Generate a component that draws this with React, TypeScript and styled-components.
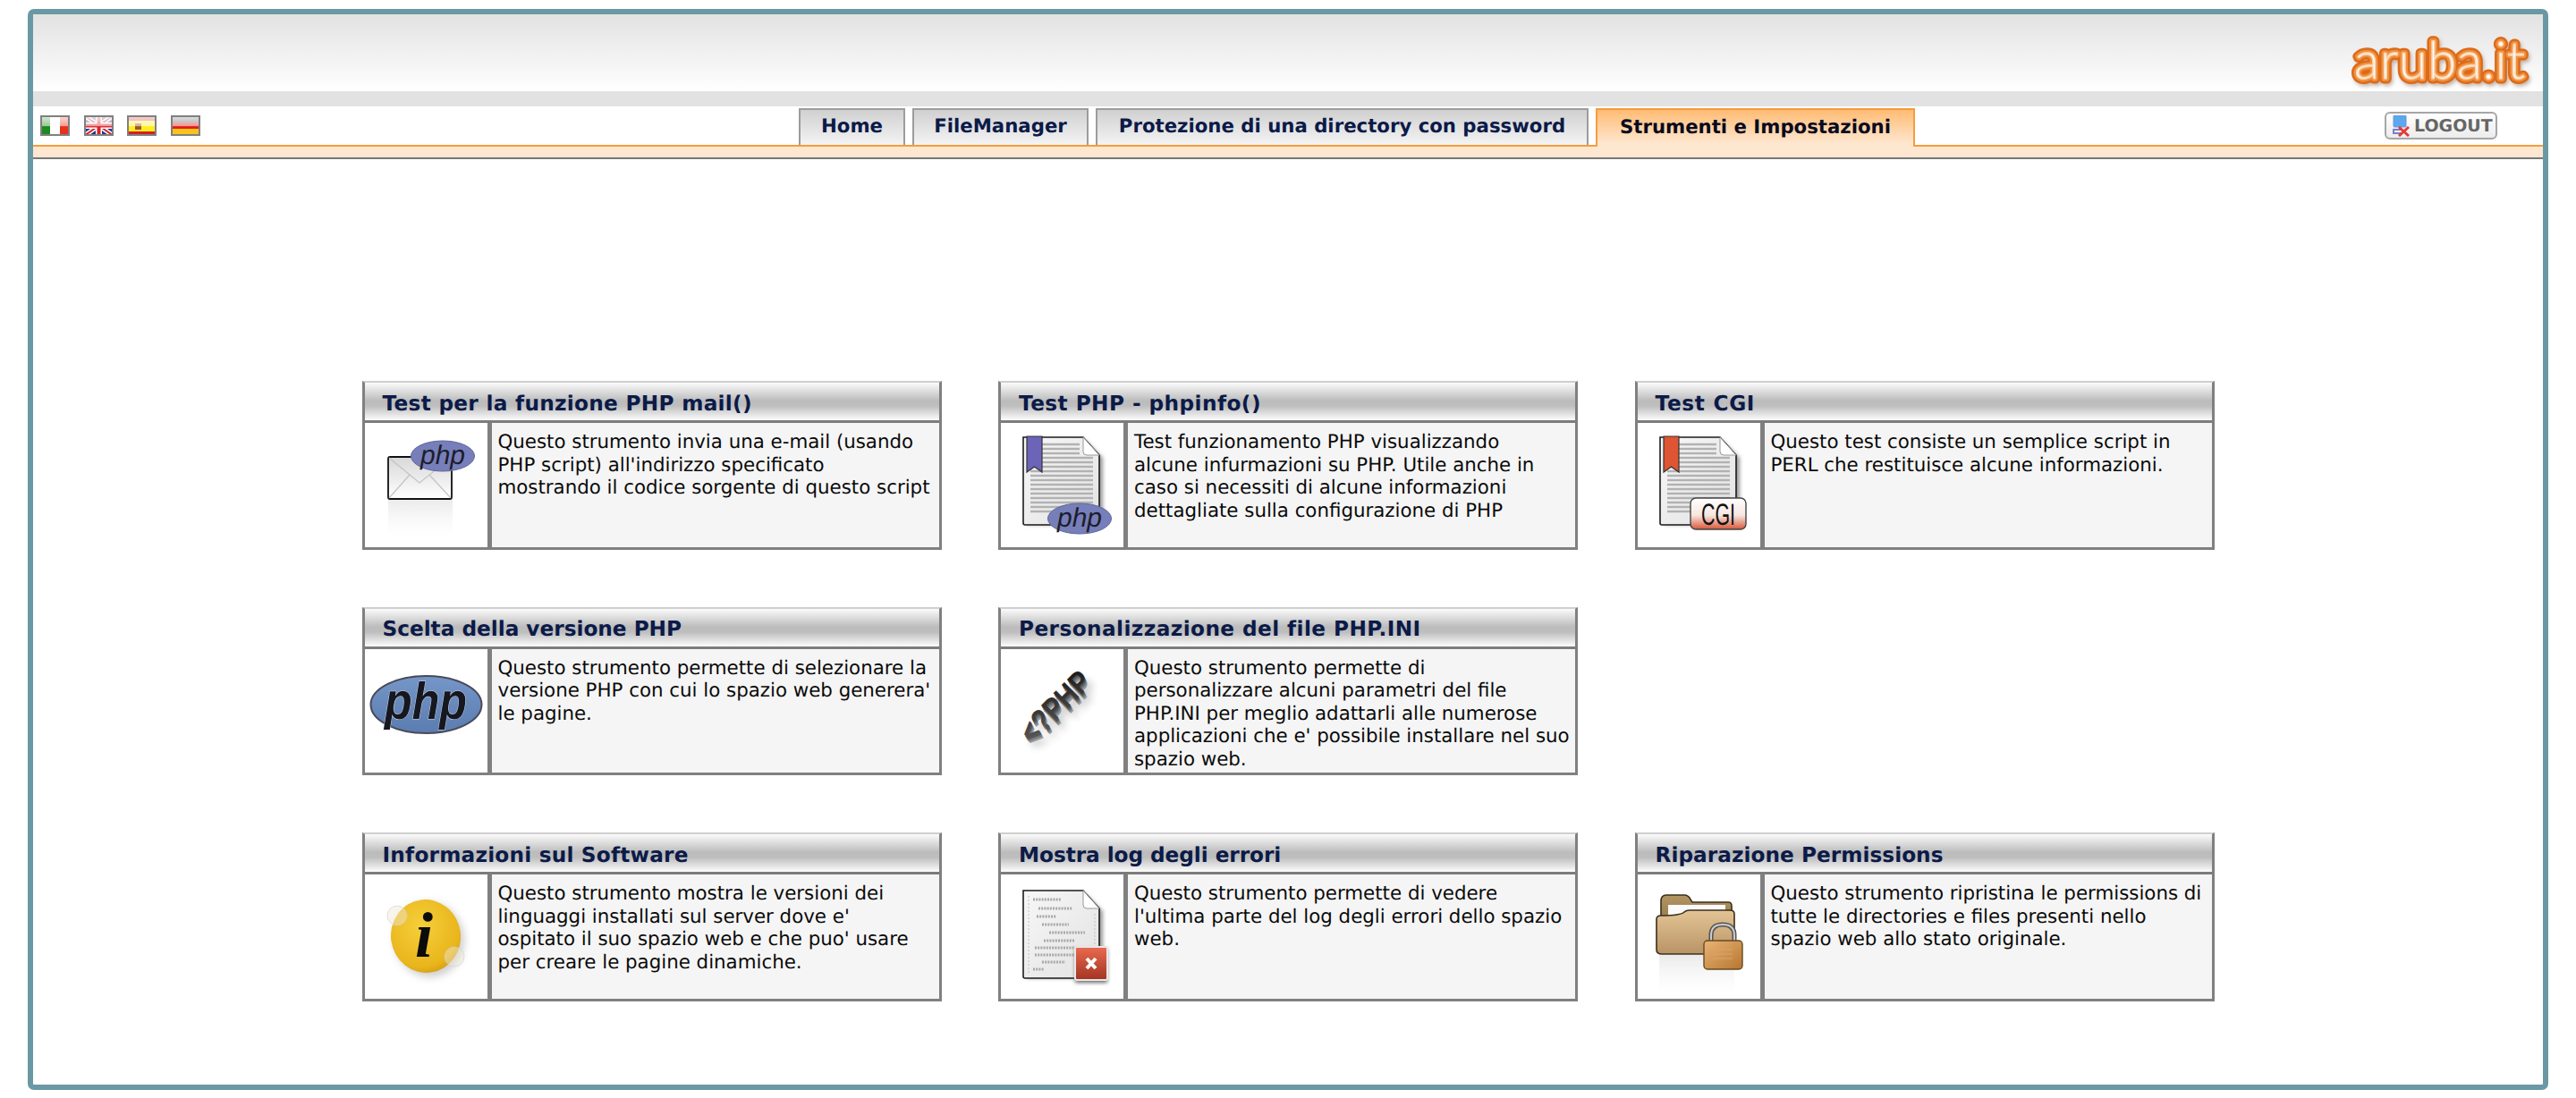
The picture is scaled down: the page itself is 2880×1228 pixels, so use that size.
import React from "react";
import styled, { createGlobalStyle } from "styled-components";

const Global = createGlobalStyle`
  html, body { margin: 0; padding: 0; background: #fff; }
  body { font-family: "DejaVu Sans", Verdana, sans-serif; text-rendering: geometricPrecision; }
`;

const Frame = styled.div`
  box-sizing: border-box;
  width: 2818px;
  height: 1209px;
  margin: 10px 31px 9px;
  border: 6px solid #6a99a3;
  border-radius: 7px;
  background: #fff;
  overflow: hidden;
`;

const Header = styled.header`
  height: 86px;
  display: flex;
  justify-content: flex-end;
  align-items: flex-end;
  padding: 0 14px 4px 0;
  box-sizing: border-box;
  background: linear-gradient(#e2e2e2, #ffffff);
`;

const Strip = styled.div`
  height: 17px;
  background: #e2e2e2;
`;

const Nav = styled.nav`
  box-sizing: border-box;
  height: 45px;
  display: flex;
  align-items: flex-end;
  padding-left: 8px;
  border-bottom: 2px solid #f79c3c;
`;

const Flags = styled.div`
  display: flex;
  gap: 15.5px;
  align-self: flex-start;
  margin-top: 10px;
`;

const Tabs = styled.div`
  display: flex;
  gap: 8px;
  margin-left: 669.5px;
  align-items: flex-end;
`;

const Tab = styled.a<{ $active?: boolean; $width: number }>`
  box-sizing: border-box;
  width: ${(p) => p.$width}px;
  height: ${(p) => (p.$active ? "43px" : "41px")};
  margin-bottom: ${(p) => (p.$active ? "-2px" : "0")};
  padding-bottom: 2px;
  display: flex;
  align-items: center;
  justify-content: center;
  border: 2px solid ${(p) => (p.$active ? "#f79c3c" : "#9c9c9c")};
  border-bottom: none;
  background: ${(p) =>
    p.$active
      ? "linear-gradient(#ffbc74, #fee7d0 92%)"
      : "linear-gradient(#d0d0d0, #f4f4f4)"};
  color: ${(p) => (p.$active ? "#0a0a1e" : "#0b1a48")};
  font: bold 21.25px "DejaVu Sans", Verdana, sans-serif;
  white-space: nowrap;
`;

const Logout = styled.a`
  box-sizing: border-box;
  width: 126px;
  height: 31px;
  margin: 6px 51px 0 auto;
  align-self: flex-start;
  display: flex;
  align-items: center;
  gap: 5px;
  padding-left: 6px;
  border: 2px solid #a6a6a6;
  border-radius: 6px;
  background: linear-gradient(#ffffff, #ececec);
  color: #666;
  font: bold 19px "DejaVu Sans", Verdana, sans-serif;
  white-space: nowrap;
`;

const Peach = styled.div`
  height: 12px;
  background: #fee7d0;
  border-bottom: 2px solid #777;
`;

const Grid = styled.main`
  display: grid;
  grid-template-columns: repeat(3, 648px);
  grid-auto-rows: 188.5px;
  column-gap: 63.5px;
  row-gap: 64px;
  justify-content: center;
  padding-top: 248px;
`;

const Card = styled.section`
  box-sizing: border-box;
  display: flex;
  flex-direction: column;
  border: 3px solid #808080;
  border-top: 2px solid #cfcfcf;
  background: #f5f5f5;
`;

const CardTitle = styled.h2<{ $tracking: number }>`
  box-sizing: border-box;
  margin: 0;
  flex: 0 0 45px;
  display: flex;
  align-items: center;
  padding: 4px 0 0 20px;
  border-bottom: 3px solid #7c7c7c;
  background: linear-gradient(#fbfbfb 0%, #bcbcbc 48%, #bebebe 62%, #fdfdfd 100%);
  color: #0b1a48;
  font: bold 23.2px "DejaVu Sans", Verdana, sans-serif;
  letter-spacing: ${(p) => p.$tracking}px;
  white-space: nowrap;
`;

const CardBody = styled.div`
  flex: 1;
  min-height: 0;
  display: flex;
`;

const IconCell = styled.div`
  box-sizing: content-box;
  flex: 0 0 137px;
  border-right: 5px solid #808080;
  background: #fff;
  overflow: hidden;
  svg { display: block; }
`;

const CardText = styled.div`
  flex: 1;
  padding: 9px 0 0 7px;
  font: 400 21.35px/25.5px "DejaVu Sans", Verdana, sans-serif;
  color: #0a0a0a;
`;

const Line = styled.span`
  display: block;
  white-space: nowrap;
`;

/* ---------- drawings ---------- */

const Shared = () => (
  <svg width="0" height="0" style={{ position: "absolute" }}>
    <defs>
      <linearGradient id="gloss" x1="0" y1="0" x2="0" y2="1">
        <stop offset="0" stopColor="#fff" stopOpacity="0.85" />
        <stop offset="0.5" stopColor="#fff" stopOpacity="0.55" />
        <stop offset="0.55" stopColor="#fff" stopOpacity="0" />
      </linearGradient>
      <linearGradient id="env" x1="0" y1="0" x2="0" y2="1">
        <stop offset="0" stopColor="#d8d8d8" />
        <stop offset="1" stopColor="#ffffff" />
      </linearGradient>
      <linearGradient id="paper" x1="0" y1="0" x2="1" y2="1">
        <stop offset="0" stopColor="#f7f7f7" />
        <stop offset="1" stopColor="#e2e2e2" />
      </linearGradient>
      <linearGradient id="fade" x1="0" y1="0" x2="0" y2="1">
        <stop offset="0" stopColor="#bbb" stopOpacity="0.3" />
        <stop offset="1" stopColor="#ddd" stopOpacity="0" />
      </linearGradient>
      <linearGradient id="cgiBadge" x1="0" y1="0" x2="0" y2="1">
        <stop offset="0" stopColor="#ffffff" />
        <stop offset="0.55" stopColor="#f7e6e0" />
        <stop offset="1" stopColor="#d9573a" />
      </linearGradient>
      <linearGradient id="redBadge" x1="0" y1="0" x2="0" y2="1">
        <stop offset="0" stopColor="#ea6a50" />
        <stop offset="1" stopColor="#a23422" />
      </linearGradient>
      <linearGradient id="folder" x1="0" y1="0" x2="0" y2="1">
        <stop offset="0" stopColor="#e3c595" />
        <stop offset="1" stopColor="#b99365" />
      </linearGradient>
      <linearGradient id="folderBack" x1="0" y1="0" x2="0" y2="1">
        <stop offset="0" stopColor="#b39563" />
        <stop offset="1" stopColor="#8e7347" />
      </linearGradient>
      <linearGradient id="lock" x1="0" y1="0" x2="1" y2="1">
        <stop offset="0" stopColor="#e9b577" />
        <stop offset="1" stopColor="#b6752f" />
      </linearGradient>
      <radialGradient id="yellow" cx="0.45" cy="0.35" r="0.75">
        <stop offset="0" stopColor="#f6cf3a" />
        <stop offset="0.75" stopColor="#e9b51c" />
        <stop offset="1" stopColor="#c58f12" />
      </radialGradient>
      <linearGradient id="bigPhp" x1="0" y1="0" x2="0" y2="1">
        <stop offset="0" stopColor="#7596c8" />
        <stop offset="1" stopColor="#5b7cb0" />
      </linearGradient>
      <linearGradient id="php3d" x1="0" y1="1" x2="1" y2="0">
        <stop offset="0" stopColor="#666" />
        <stop offset="1" stopColor="#111" />
      </linearGradient>
      <filter id="blur2"><feGaussianBlur stdDeviation="2" /></filter>
      <filter id="blur4"><feGaussianBlur stdDeviation="4" /></filter>
    </defs>
  </svg>
);

const IconSvg: React.FC<{ children: React.ReactNode }> = ({ children }) => (
  <svg width="137" height="138" viewBox="0 0 137 138">{children}</svg>
);

const PhpBadge: React.FC<{ cx: number; cy: number }> = ({ cx, cy }) => (
  <g>
    <ellipse cx={cx} cy={cy} rx="35.5" ry="17" fill="#777fba" stroke="#5f6699" strokeWidth="1" />
    <text
      x={cx}
      y={cy + 9}
      textAnchor="middle"
      fontFamily="'Liberation Sans', sans-serif"
      fontStyle="italic"
      fontSize="30"
      fill="#1d1d2b"
    >
      php
    </text>
  </g>
);

const DocBase: React.FC<{ mark?: string }> = ({ mark }) => {
  const rows: number[] = [];
  for (let y = 24; y < 100; y += 5) rows.push(y);
  return (
    <g>
      <path d="M27 18 H93 L112 37 V112 H27 Z" fill="#999" filter="url(#blur2)" transform="translate(2 2)" />
      <path d="M25 16 H92 L110 36 V112 Q110 114 108 114 H27 Q25 114 25 112 Z" fill="url(#paper)" stroke="#1b1b1b" strokeWidth="1.6" />
      <path d="M92 16 V32 Q92 36 96 36 H110 Z" fill="#fff" stroke="#999" strokeWidth="1" />
      {mark &&
        rows.map((y) => (
          <line key={y} x1="33" x2={y < 36 ? 88 : 103} y1={y} y2={y} stroke="#b2b2b2" strokeWidth="2.4" />
        ))}
      {mark && (
        <path d="M29 15 H46 V55 L37.5 49 L29 55 Z" fill={mark} stroke="#333" strokeWidth="1.2" />
      )}
    </g>
  );
};

const MailIcon = () => (
  <IconSvg>
    <rect x="26" y="85" width="72" height="42" fill="url(#fade)" />
    <rect x="26" y="38" width="71" height="47" rx="2" fill="url(#env)" stroke="#111" strokeWidth="1.8" />
    <path d="M27 39 L61 67 L96 39 M27 84 L50 58 M96 84 L72 58" fill="none" stroke="#c4c4c4" strokeWidth="1.2" />
    <PhpBadge cx={87} cy={37} />
  </IconSvg>
);

const PhpDocIcon = () => (
  <IconSvg>
    <DocBase mark="#6b64b8" />
    <PhpBadge cx={88} cy={107} />
  </IconSvg>
);

const CgiIcon = () => (
  <IconSvg>
    <DocBase mark="#df5433" />
    <rect x="59" y="84" width="62" height="35" rx="6" fill="url(#cgiBadge)" stroke="#444" strokeWidth="1.4" />
    <text
      x="90"
      y="114"
      textAnchor="middle"
      fontFamily="'Liberation Sans', sans-serif"
      fontSize="34"
      fill="#111"
      textLength="38"
      lengthAdjust="spacingAndGlyphs"
    >
      CGI
    </text>
  </IconSvg>
);

const PhpLogoIcon = () => (
  <IconSvg>
    <ellipse cx="68.5" cy="62" rx="62" ry="32" fill="url(#bigPhp)" stroke="#4a4a58" strokeWidth="2" />
    <text
      x="68"
      y="78"
      textAnchor="middle"
      fontFamily="'Liberation Sans', sans-serif"
      fontStyle="italic"
      fontWeight="700"
      fontSize="58"
      fill="#17171f"
      stroke="#cfd9ea"
      strokeWidth="1"
      paintOrder="stroke"
      textLength="92"
      lengthAdjust="spacingAndGlyphs"
    >
      php
    </text>
  </IconSvg>
);

const PhpTagIcon = () => {
  const t = (dx: number, dy: number, fill: string) => (
    <text
      x="0"
      y="0"
      transform={`translate(${35 + dx} ${106 + dy}) rotate(-45)`}
      fontFamily="'Liberation Sans', sans-serif"
      fontWeight="700"
      fontSize="34"
      fill={fill}
      textLength="96"
      lengthAdjust="spacingAndGlyphs"
    >
      {"<?PHP"}
    </text>
  );
  return (
    <IconSvg>
      <g filter="url(#blur4)" opacity="0.35">{t(8, 10, "#333")}</g>
      {t(3, 6, "#999")}
      {t(2, 4, "#777")}
      {t(1, 2, "#555")}
      {t(0, 0, "url(#php3d)")}
    </IconSvg>
  );
};

const InfoIcon = () => (
  <IconSvg>
    <ellipse cx="72" cy="73" rx="39" ry="42" fill="#bbb" filter="url(#blur4)" opacity="0.7" transform="rotate(-8 72 73)" />
    <ellipse cx="68" cy="69" rx="39" ry="41" fill="url(#yellow)" transform="rotate(-8 68 69)" />
    <text
      x="66"
      y="92"
      textAnchor="middle"
      fontFamily="'Liberation Serif', serif"
      fontStyle="italic"
      fontWeight="700"
      fontSize="72"
      fill="#0c0c0c"
    >
      i
    </text>
    <circle cx="36" cy="46" r="11" fill="#efe9d6" fillOpacity="0.45" stroke="#cfcfcf" strokeOpacity="0.6" strokeWidth="1" />
    <circle cx="100" cy="92" r="11" fill="#efe9d6" fillOpacity="0.45" stroke="#cfcfcf" strokeOpacity="0.6" strokeWidth="1" />
  </IconSvg>
);

const LogIcon = () => {
  const rows: [number, number, number][] = [
    [32, 12, 32], [42, 18, 38], [51, 16, 22], [60, 22, 30], [69, 30, 40], [78, 24, 34], [86, 14, 50], [94, 14, 54], [102, 22, 26], [110, 12, 12],
  ];
  return (
    <IconSvg>
      <g transform="translate(0 2)"><DocBase /></g>
      <path d="M31 24 V112 M105 44 V112" stroke="#c8c8c8" strokeWidth="1.2" strokeDasharray="2 2" />
      {rows.map(([y, x, w]) => (
        <line key={y} x1={24 + x} x2={24 + x + w} y1={y - 4} y2={y - 4} stroke="#a8a8a8" strokeWidth="3" strokeDasharray="2 1.2" />
      ))}
      <rect x="83" y="83" width="36" height="38" fill="#666" filter="url(#blur2)" />
      <rect x="83" y="81" width="36" height="37" rx="2" fill="url(#redBadge)" stroke="#e8e8e8" strokeWidth="2" />
      <path d="M96 94 L106 105 M106 94 L96 105" stroke="#fff" strokeWidth="4" />
    </IconSvg>
  );
};

const FolderIcon = () => (
  <IconSvg>
    <rect x="24" y="90" width="84" height="42" fill="url(#fade)" />
    <path d="M26 30 Q26 23 32 23 H52 Q57 23 59 28 L61 31 H101 Q105 31 105 35 V60 H26 Z" fill="url(#folderBack)" stroke="#3a2f1c" strokeWidth="1.6" />
    <rect x="34" y="34" width="64" height="24" fill="#fafafa" />
    <path d="M21 50 Q21 46 26 46 Q48 46 52 42 Q54 40 58 40 H103 Q108 40 108 44 V84 Q108 89 103 89 H27 Q21 89 21 84 Z" fill="url(#folder)" stroke="#3a2f1c" strokeWidth="1.6" />
    <path d="M82 76 V68 Q82 56 95 56 Q108 56 108 68 V76" fill="none" stroke="#555" strokeWidth="5" />
    <path d="M82 76 V68 Q82 56 95 56 Q108 56 108 68 V76" fill="none" stroke="#ccc" strokeWidth="2" />
    <rect x="74" y="74" width="43" height="32" rx="4" fill="url(#lock)" stroke="#6a4a20" strokeWidth="1.4" />
    <path d="M84 84 H106 M84 89 H106 M84 94 H106" stroke="#d9a566" strokeWidth="1.2" />
  </IconSvg>
);

const FlagBox: React.FC<{ children: React.ReactNode }> = ({ children }) => (
  <svg width="33" height="23" viewBox="0 0 33 23">
    {children}
    <rect x="0" y="0" width="33" height="23" fill="url(#gloss)" />
    <rect x="1" y="1" width="31" height="21" fill="none" stroke="#808080" strokeWidth="2" />
  </svg>
);

const FlagIt = () => (
  <FlagBox>
    <rect width="11" height="23" fill="#1f8a1f" />
    <rect x="11" width="11" height="23" fill="#fff" />
    <rect x="22" width="11" height="23" fill="#e8301c" />
  </FlagBox>
);
const FlagUk = () => (
  <FlagBox>
    <rect width="33" height="23" fill="#1d3a8a" />
    <path d="M0 0 L33 23 M33 0 L0 23" stroke="#fff" strokeWidth="5" />
    <path d="M0 0 L33 23 M33 0 L0 23" stroke="#d8232a" strokeWidth="2" />
    <path d="M16.5 0 V23 M0 11.5 H33" stroke="#fff" strokeWidth="7" />
    <path d="M16.5 0 V23 M0 11.5 H33" stroke="#d8232a" strokeWidth="4" />
  </FlagBox>
);
const FlagEs = () => (
  <FlagBox>
    <rect width="33" height="23" fill="#d81e1e" />
    <rect y="6" width="33" height="12" fill="#ffee22" />
    <rect x="9" y="9" width="7" height="7" fill="#a0552a" />
  </FlagBox>
);
const FlagDe = () => (
  <FlagBox>
    <rect width="33" height="8" fill="#555" />
    <rect y="8" width="33" height="7" fill="#e0201a" />
    <rect y="15" width="33" height="8" fill="#f8c31c" />
  </FlagBox>
);

const ArubaLogo = () => {
  const t = (props: React.SVGProps<SVGTextElement>) => (
    <text
      x="7"
      y="56"
      fontFamily="Lato, 'Open Sans', sans-serif"
      fontSize="58"
      fontWeight="300"
      strokeLinejoin="round"
      strokeLinecap="round"
      letterSpacing="0.6"
      {...props}
    >
      aruba.it
    </text>
  );
  return (
    <svg width="204" height="66" viewBox="0 0 204 66" overflow="visible">
      {t({ fill: "#8a6a55", stroke: "#8a6a55", strokeWidth: 10, opacity: 0.5, transform: "translate(2 3)", filter: "url(#blur2)" })}
      {t({ fill: "#dd6a18", stroke: "#dd6a18", strokeWidth: 11 })}
      {t({ fill: "#f08f3e", stroke: "#f08f3e", strokeWidth: 6 })}
      {t({ fill: "#fff", stroke: "#fbd3ad", strokeWidth: 1.5 })}
    </svg>
  );
};

const LogoutIcon = () => (
  <svg width="20" height="24" viewBox="0 0 20 24">
    <rect x="2" y="0" width="14" height="13" rx="1" fill="#5aa8f0" stroke="#7a8fd0" strokeWidth="1" />
    <path d="M9 13 V16 H2 V20 H11" fill="none" stroke="#7a7fd0" strokeWidth="2" />
    <path d="M8 13 L19 23 M19 13 L8 23" stroke="#e23a3a" strokeWidth="3" />
  </svg>
);

/* ---------- content ---------- */

type Tool = { title: string; tracking: number; lines: string[]; icon: React.ReactNode } | null;

const tools: Tool[] = [
  { title: "Test per la funzione PHP mail()", tracking: 0.3, icon: <MailIcon />, lines: ["Questo strumento invia una e-mail (usando", "PHP script) all'indirizzo specificato", "mostrando il codice sorgente di questo script"] },
  { title: "Test PHP - phpinfo()", tracking: 0.45, icon: <PhpDocIcon />, lines: ["Test funzionamento PHP visualizzando", "alcune infurmazioni su PHP. Utile anche in", "caso si necessiti di alcune informazioni", "dettagliate sulla configurazione di PHP"] },
  { title: "Test CGI", tracking: 0.7, icon: <CgiIcon />, lines: ["Questo test consiste un semplice script in", "PERL che restituisce alcune informazioni."] },
  { title: "Scelta della versione PHP", tracking: 0, icon: <PhpLogoIcon />, lines: ["Questo strumento permette di selezionare la", "versione PHP con cui lo spazio web generera'", "le pagine."] },
  { title: "Personalizzazione del file PHP.INI", tracking: 0.43, icon: <PhpTagIcon />, lines: ["Questo strumento permette di", "personalizzare alcuni parametri del file", "PHP.INI per meglio adattarli alle numerose", "applicazioni che e' possibile installare nel suo", "spazio web."] },
  null,
  { title: "Informazioni sul Software", tracking: 0.22, icon: <InfoIcon />, lines: ["Questo strumento mostra le versioni dei", "linguaggi installati sul server dove e'", "ospitato il suo spazio web e che puo' usare", "per creare le pagine dinamiche."] },
  { title: "Mostra log degli errori", tracking: -0.05, icon: <LogIcon />, lines: ["Questo strumento permette di vedere", "l'ultima parte del log degli errori dello spazio", "web."] },
  { title: "Riparazione Permissions", tracking: 0.05, icon: <FolderIcon />, lines: ["Questo strumento ripristina le permissions di", "tutte le directories e files presenti nello", "spazio web allo stato originale."] },
];

const tabs = [
  { label: "Home", width: 119 },
  { label: "FileManager", width: 197 },
  { label: "Protezione di una directory con password", width: 551 },
  { label: "Strumenti e Impostazioni", width: 357 },
];

export default function App() {
  return (
    <>
      <Global />
      <Shared />
      <Frame>
        <Header>
          <ArubaLogo />
        </Header>
        <Strip />
        <Nav>
          <Flags>
            <FlagIt />
            <FlagUk />
            <FlagEs />
            <FlagDe />
          </Flags>
          <Tabs>
            {tabs.map((t, i) => (
              <Tab key={t.label} $width={t.width} $active={i === 3}>{t.label}</Tab>
            ))}
          </Tabs>
          <Logout>
            <LogoutIcon />
            LOGOUT
          </Logout>
        </Nav>
        <Peach />
        <Grid>
          {tools.map((tool, i) =>
            tool ? (
              <Card key={tool.title}>
                <CardTitle $tracking={tool.tracking}>{tool.title}</CardTitle>
                <CardBody>
                  <IconCell>{tool.icon}</IconCell>
                  <CardText>
                    {tool.lines.map((l) => (
                      <Line key={l}>{l}</Line>
                    ))}
                  </CardText>
                </CardBody>
              </Card>
            ) : (
              <div key={i} />
            )
          )}
        </Grid>
      </Frame>
    </>
  );
}
